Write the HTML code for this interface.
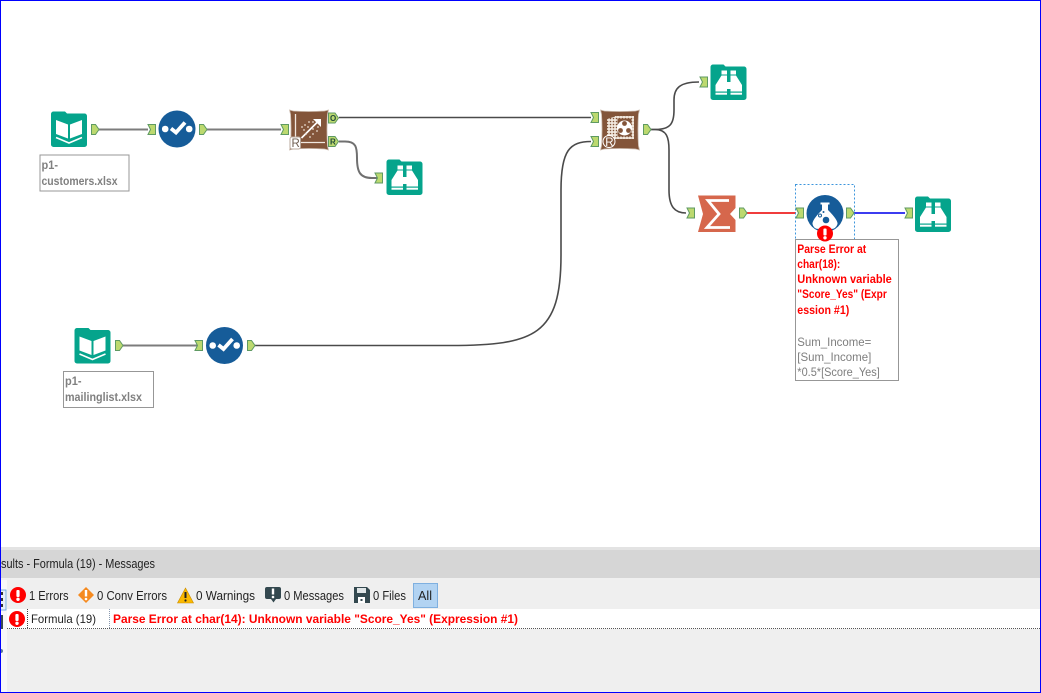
<!DOCTYPE html>
<html><head><meta charset="utf-8"><style>
html,body{margin:0;padding:0;width:1041px;height:693px;overflow:hidden;background:#fff}
svg{display:block;position:absolute;left:0;top:0}
text{font-family:"Liberation Sans",sans-serif}
</style></head><body>
<svg width="1041" height="693" viewBox="0 0 1041 693" xmlns="http://www.w3.org/2000/svg">
<defs>
<pattern id="dots" width="3" height="3" patternUnits="userSpaceOnUse"><rect width="3" height="3" fill="#f1e7dc"/><circle cx="1.500" cy="1.500" r=".8" fill="#83553a"/></pattern>
<g id="outp"><path d="M0.500 -0.500H4.500L8 4.500L4.500 9.500H0.500Z" fill="#bcd96f" stroke="#5f9a63" stroke-width="1"/></g>
<g id="inp"><path d="M0 -0.500H7.500V9.500H0L2.500 4.500Z" fill="#bcd96f" stroke="#5f9a63" stroke-width="1"/></g>
<g id="book">
<path d="M0 3a2.500 2.500 0 0 1 2.500-2.500H14l2 2H33.500A2.500 2.500 0 0 1 36 5V33.500A2.500 2.500 0 0 1 33.500 36H2.500A2.500 2.500 0 0 1 0 33.500Z" fill="#05a48c"/>
<path d="M5 9L17 13.500V27.500L5 23ZM31 9L19 13.500V27.500L31 23Z" fill="#fff"/>
<path d="M5 26.500L18 32L31 26.500" fill="none" stroke="#fff" stroke-width="1.500"/>
</g>
<g id="bino">
<path d="M0 3a2.500 2.500 0 0 1 2.500-2.500H13l2 2H33.500A2.500 2.500 0 0 1 36 5V33.500A2.500 2.500 0 0 1 33.500 36H2.500A2.500 2.500 0 0 1 0 33.500Z" fill="#05a48c"/>
<path d="M11 6.500h5.500v4h-5.500zM20 6.500h5.500v4h-5.500z" fill="#fff"/>
<path d="M11 11.500h5.500v16h-11.500V21ZM25.500 11.500H20v16h11.500V21Z" fill="#fff"/>
<rect x="16" y="18" width="4.500" height="7" fill="#fff"/>
<rect x="5" y="28.700" width="11.500" height="2" fill="#fff"/><rect x="20" y="28.700" width="11.500" height="2" fill="#fff"/>
</g>
<g id="sel">
<circle cx="18.500" cy="18.500" r="18.500" fill="#165c99"/>
<circle cx="6.700" cy="18.500" r="3.300" fill="#fff"/><circle cx="30.700" cy="18.500" r="3.300" fill="#fff"/>
<path d="M12.500 18L17.500 22L26.500 12" fill="none" stroke="#fff" stroke-width="3.800"/>
</g>
<g id="pill">
<path d="M0 0L4 1Q19 2 35 1L39 0L38 4Q37 20 38 36L39 40L35 39Q19 38 4 39L0 40L1 36Q2 20 1 4Z" fill="#83553a" stroke="#cdbdb1" stroke-width=".8"/>
</g>
<g id="err">
<circle cx="8" cy="8" r="8" fill="#f00"/>
<rect x="6.400" y="3" width="3.200" height="7" rx="1" fill="#fff"/><circle cx="8" cy="12.300" r="1.700" fill="#fff"/>
</g>
</defs>

<rect width="1041" height="693" fill="#fff"/>

<!-- connections -->
<g fill="none" stroke-width="2">
<path d="M98 129.500H148" stroke="#7c7c7c"/>
<path d="M206 129.500H281" stroke="#7c7c7c"/>
<path d="M339 117.500H591" stroke="#4a4a4a" stroke-width="1.600"/>
<path d="M339 141.500H345C356 141.500 357 147 357 158C357 172 360 178 372 178H378" stroke="#707070"/>
<path d="M122 345.500H198" stroke="#7c7c7c"/>
<path d="M255 345.500H450C535 345.500 561 335 561 255V190C561 150 570 141.500 591 141.500" stroke="#4a4a4a" stroke-width="1.600"/>
<path d="M651 129.500H655C670 129.500 674 124 674 110V100C674 88 680 82 699 82" stroke="#4a4a4a" stroke-width="1.600"/>
<path d="M651 129.500H655C667 129.500 669 138 669 150V190C669 207 675 213 686 213" stroke="#4a4a4a" stroke-width="1.600"/>
<path d="M746 213H796" stroke="#f03c3c"/>
<path d="M854 213H905" stroke="#3c3cf0"/>
</g>

<!-- tools row 1 -->
<use href="#book" x="51" y="111"/>
<use href="#outp" x="91" y="125"/>
<use href="#inp" x="148" y="125"/>
<use href="#sel" x="158.500" y="110.500"/>
<use href="#outp" x="199" y="125"/>
<use href="#inp" x="281" y="125"/>

<!-- brown R tool -->
<use href="#pill" x="289.500" y="110"/>
<g fill="none" stroke="#f1e7df" stroke-width="1.300">
<path d="M295.500 114V137"/><path d="M300 142.500H325"/>
</g>
<path d="M301.500 138L318 121.500" stroke="#fff" stroke-width="1.700" fill="none"/>
<path d="M313 119H321V127Z" fill="#fff"/>
<g fill="#eaddd2"><circle cx="305" cy="125" r=".9"/><circle cx="309" cy="122" r=".9"/><circle cx="304" cy="130" r=".9"/><circle cx="308" cy="127" r=".9"/><circle cx="313" cy="134" r=".9"/><circle cx="317" cy="131" r=".9"/><circle cx="310" cy="137" r=".9"/><circle cx="302" cy="127" r=".9"/><circle cx="313" cy="129" r=".9"/><circle cx="306" cy="134" r=".9"/><circle cx="313" cy="122" r=".9"/><circle cx="318" cy="127" r=".9"/></g>
<rect x="290" y="137" width="10.500" height="12" rx="2" fill="#fff" stroke="#b9a89c"/>
<text x="291.500" y="147" font-size="11.500" fill="#6e5d50">R</text>
<path d="M328.500 113H335L338.500 118L335 123H328.500Z" fill="#bcd96f" stroke="#5f9a63"/>
<path d="M328.500 136.500H335L338.500 141.500L335 146.500H328.500Z" fill="#bcd96f" stroke="#5f9a63"/>
<text x="330" y="121" font-size="8" font-weight="bold" fill="#1f4a3a">O</text>
<text x="330" y="144.500" font-size="8" font-weight="bold" fill="#1f4a3a">R</text>

<use href="#inp" x="375" y="173.500"/>
<use href="#bino" x="386.500" y="159"/>

<!-- annotation 1 -->
<rect x="40" y="155" width="89" height="36" fill="#fff" stroke="#979797"/>
<g font-size="12" font-weight="bold" fill="#808080">
<text x="41.500" y="169" textLength="16.500" lengthAdjust="spacingAndGlyphs">p1-</text>
<text x="41.500" y="185" textLength="76" lengthAdjust="spacingAndGlyphs">customers.xlsx</text>
</g>

<!-- tools row 2 -->
<use href="#book" x="74.500" y="327.500"/>
<use href="#outp" x="115" y="341"/>
<use href="#inp" x="195" y="341"/>
<use href="#sel" x="206" y="327"/>
<use href="#outp" x="247" y="341"/>
<rect x="63.500" y="371.500" width="90" height="36" fill="#fff" stroke="#979797"/>
<g font-size="12" font-weight="bold" fill="#808080">
<text x="65" y="385" textLength="16.500" lengthAdjust="spacingAndGlyphs">p1-</text>
<text x="65" y="401" textLength="77" lengthAdjust="spacingAndGlyphs">mailinglist.xlsx</text>
</g>

<!-- score tool -->
<use href="#inp" x="591" y="113"/>
<use href="#inp" x="591" y="137"/>
<use href="#pill" x="600.500" y="110"/>
<path d="M607 119L617 116V138L607 143Z" fill="url(#dots)"/>
<rect x="615" y="116" width="19" height="23" fill="url(#dots)"/>
<rect x="617.500" y="118.500" width="14" height="18" fill="#83553a"/>
<circle cx="624.500" cy="128" r="7.500" fill="#fff"/>
<circle cx="624.500" cy="123.500" r="2.400" fill="#83553a"/><circle cx="620.500" cy="130.500" r="2.400" fill="#83553a"/><circle cx="628.500" cy="130.500" r="2.400" fill="#83553a"/>
<circle cx="609" cy="141.500" r="6" fill="#83553a" stroke="#fff"/>
<text x="605.200" y="146" font-size="11.500" fill="#fff">R</text>
<use href="#outp" x="643" y="125"/>

<use href="#inp" x="700" y="77.500"/>
<use href="#bino" x="710.500" y="64"/>

<!-- summarize -->
<use href="#inp" x="687" y="208.500"/>
<path d="M698 195.500H735.500V208L730 214L735.500 220V232H698L703 214Z" fill="#d6674c"/>
<path d="M729 200.500H708L719 214L707 227.500H730" fill="none" stroke="#fff" stroke-width="2.800"/>
<use href="#outp" x="739" y="208.500"/>

<!-- formula -->
<rect x="795.500" y="184.500" width="59" height="60" fill="none" stroke="#3c96dc" stroke-dasharray="2 2"/>
<use href="#inp" x="796" y="208.500"/>
<circle cx="825" cy="213.500" r="18.500" fill="#165c99"/>
<path d="M820.500 202.500H829.500V204.500H828V210Q838 220 837.500 224Q836 229 831 229H819Q813.500 229 812.500 224Q812 220 822 210V204.500H820.500Z" fill="#fff"/>
<circle cx="826" cy="220" r="3.300" fill="#165c99"/><circle cx="820" cy="215.500" r="1.500" fill="none" stroke="#165c99"/><circle cx="823.500" cy="212" r="1" fill="#165c99"/>
<use href="#outp" x="846" y="208.500"/>
<use href="#inp" x="905" y="208.500"/>
<use href="#bino" x="915" y="196"/>

<rect x="795.500" y="239.500" width="103" height="141" fill="#fff" stroke="#979797"/>
<use href="#err" x="817" y="225.500"/>
<g font-size="12" font-weight="bold" fill="#f00">
<text x="797.300" y="253" textLength="69" lengthAdjust="spacingAndGlyphs">Parse Error at</text>
<text x="797.300" y="268" textLength="43" lengthAdjust="spacingAndGlyphs">char(18):</text>
<text x="797.300" y="283" textLength="94.500" lengthAdjust="spacingAndGlyphs">Unknown variable</text>
<text x="797.300" y="298" textLength="89.500" lengthAdjust="spacingAndGlyphs">"Score_Yes" (Expr</text>
<text x="797.300" y="314" textLength="52" lengthAdjust="spacingAndGlyphs">ession #1)</text>
</g>
<g font-size="12" fill="#7e7e7e">
<text x="797.300" y="346" textLength="74" lengthAdjust="spacingAndGlyphs">Sum_Income=</text>
<text x="797.300" y="361" textLength="74" lengthAdjust="spacingAndGlyphs">[Sum_Income]</text>
<text x="797.300" y="376" textLength="82.500" lengthAdjust="spacingAndGlyphs">*0.5*[Score_Yes]</text>
</g>

<!-- bottom panel -->
<rect x="0" y="547" width="1041" height="3" fill="#e3e3e3"/>
<rect x="0" y="550" width="1041" height="28" fill="#d6d6d6"/>
<rect x="0" y="578" width="1041" height="2" fill="#f0f0f0"/>
<rect x="0" y="580" width="1041" height="112" fill="#efefef"/>
<rect x="0" y="580" width="7" height="112" fill="#f8f8f8"/>
<text x="1" y="568" font-size="12.500" fill="#222" textLength="154" lengthAdjust="spacingAndGlyphs">sults - Formula (19) - Messages</text>

<rect x="7" y="609" width="1034" height="20" fill="#fff"/>
<path d="M7 628.500H1041" stroke="#555" stroke-dasharray="1 1"/>
<path d="M27.500 609V628" stroke="#444" stroke-dasharray="1 1"/>
<path d="M109.500 609V628" stroke="#8a9ab0" stroke-dasharray="1 1"/>

<!-- left sliver -->
<rect x="0" y="590" width="6" height="20" fill="#e8f0f8" stroke="#5a9ad8" stroke-width=".8"/>
<rect x="1" y="592" width="2" height="3" fill="#333"/><rect x="1" y="598" width="2" height="3" fill="#333"/><rect x="1" y="604" width="2" height="3" fill="#333"/>
<rect x="0" y="615" width="3" height="14" fill="#3a4a50"/>
<circle cx="1" cy="651" r="2" fill="#5a7a9a"/>

<!-- toolbar -->
<use href="#err" x="10" y="587"/>
<text x="29" y="600" font-size="12.500" fill="#222" textLength="39.500" lengthAdjust="spacingAndGlyphs">1 Errors</text>
<path d="M86 587L94 595L86 603L78 595Z" fill="#f58a1f"/>
<rect x="84.800" y="590" width="2.400" height="6.500" fill="#fff"/><circle cx="86" cy="599" r="1.300" fill="#fff"/>
<text x="97" y="600" font-size="12.500" fill="#222" textLength="70" lengthAdjust="spacingAndGlyphs">0 Conv Errors</text>
<path d="M185.500 588L193.500 603H177.500Z" fill="#fbb900" stroke="#c98c00" stroke-width=".6"/>
<rect x="184.500" y="592" width="2" height="6" fill="#222"/><circle cx="185.500" cy="600.500" r="1.100" fill="#222"/>
<text x="196" y="600" font-size="12.500" fill="#222" textLength="59" lengthAdjust="spacingAndGlyphs">0 Warnings</text>
<path d="M267 587H279Q281 587 281 589V597Q281 599 279 599H276L273.500 602.500L271 599H267Q265 599 265 597V589Q265 587 267 587Z" fill="#33484f"/>
<rect x="271.800" y="588.500" width="2.400" height="6" fill="#fff"/><circle cx="273" cy="597" r="1.300" fill="#fff"/>
<text x="284" y="600" font-size="12.500" fill="#222" textLength="60" lengthAdjust="spacingAndGlyphs">0 Messages</text>
<path d="M354 587H367L370 590V603H354Z" fill="#33484f"/>
<rect x="357" y="588" width="9" height="5" fill="#dfe5e7"/><rect x="358" y="597" width="7" height="6" fill="#fff"/><rect x="360.500" y="599" width="2" height="2" fill="#33484f"/>
<text x="373" y="600" font-size="12.500" fill="#222" textLength="33" lengthAdjust="spacingAndGlyphs">0 Files</text>
<rect x="413.500" y="583.500" width="24" height="24" fill="#b2d3f2" stroke="#7fb0e0"/>
<text x="418" y="600" font-size="12.500" fill="#222" textLength="14" lengthAdjust="spacingAndGlyphs">All</text>

<use href="#err" x="9" y="611"/>
<text x="31" y="623" font-size="12" fill="#222" textLength="65" lengthAdjust="spacingAndGlyphs">Formula (19)</text>
<text x="113" y="623" font-size="12" font-weight="bold" fill="#f00" textLength="405" lengthAdjust="spacingAndGlyphs">Parse Error at char(14): Unknown variable "Score_Yes" (Expression #1)</text>

<!-- blue border -->
<rect x="0.500" y="0.500" width="1040" height="692" fill="none" stroke="#0000ff"/>
</svg>
</body></html>
